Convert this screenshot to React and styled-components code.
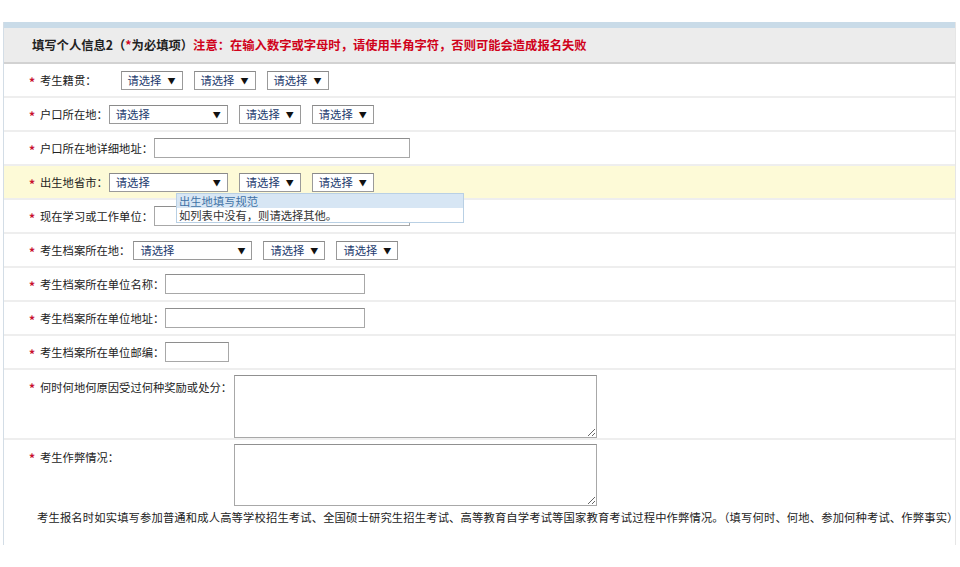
import React from "react";
import styled, { createGlobalStyle } from "styled-components";

const Global = createGlobalStyle`
  html, body { margin: 0; padding: 0; background: #fff; }
  body { font-family: "Noto Sans CJK SC", "Noto Sans", sans-serif; color: #222; }
  * { box-sizing: border-box; }
`;

const Page = styled.div`
  padding-top: 22px;
  width: 960px;
  height: 567px;
  overflow: hidden;
`;

const Panel = styled.div`
  margin: 0 4px 0 3px;
  border-left: 1px solid #d3dde6;
  border-right: 1px solid #e6e6e6;
`;

const Header = styled.div`
  border-top: 6px solid #c9dbe8;
  border-bottom: 2px solid #d2d2d2;
  background: #ececec;
  height: 42px;
  display: flex;
  align-items: center;
  padding-left: 28px;
  font-size: 12.3px;
  font-weight: bold;
  white-space: nowrap;
`;

const Red = styled.span`
  color: #d0021b;
`;

const Row = styled.div`
  position: relative;
  display: flex;
  align-items: ${(p) => (p.$top ? "flex-start" : "center")};
  height: ${(p) => p.$h || 34}px;
  padding-left: 25px;
  padding-top: ${(p) => (p.$top ? 4 : 0)}px;
  border-bottom: 2px solid #eeeeee;
  background: ${(p) => (p.$hl ? "#fdfad7" : "transparent")};
  font-size: 11.3px;
  white-space: nowrap;
`;

const Star = styled.span`
  color: #c8102e;
  font-size: 12px;
  font-weight: bold;
  width: 11px;
  line-height: 1;
  margin-top: ${(p) => (p.$top ? 8 : 3)}px;
`;

const Label = styled.span`
  color: #222;
  line-height: 19px;
  margin-top: ${(p) => (p.$top ? 4 : 0)}px;
  min-width: ${(p) => p.$w || 0}px;
  margin-right: ${(p) => p.$gap || 1}px;
`;

const Selects = styled.div`
  display: flex;
  gap: 11px;
`;

const FakeSelect = styled.div`
  width: ${(p) => (p.$wide ? 119 : 62)}px;
  height: 19px;
  border: 1px solid #9a9a9a;
  border-top-color: #8a8a8a;
  background: #fff;
  display: flex;
  align-items: center;
  justify-content: ${(p) => (p.$wide ? "space-between" : "flex-start")};
  padding: 0 6px 0 6px;
  color: #1d3b6e;
  font-size: 11.3px;
`;

const Arrow = styled.span`
  color: #111;
  font-size: 8px;
  margin-left: ${(p) => (p.$wide ? 0 : 6)}px;
`;

const Input = styled.input`
  width: ${(p) => p.$w}px;
  height: 20px;
  border: 1px solid #a8a8a8;
  border-top-color: #8e8e8e;
  background: #fff;
  padding: 0;
  margin: 0;
  outline: none;
`;

const Area = styled.textarea`
  width: 363px;
  height: ${(p) => p.$h}px;
  border: 1px solid #a8a8a8;
  border-top-color: #909090;
  margin: ${(p) => p.$mt || 0}px 0 0 0;
  padding: 0;
  background: #fff;
  outline: none;
`;

const Tip = styled.div`
  position: absolute;
  left: 172px;
  top: 27px;
  width: 288px;
  border: 1px solid #b9d0e4;
  background: #fff;
  font-size: 11.3px;
  z-index: 2;
`;

const TipTitle = styled.div`
  background: #d7e6f4;
  color: #3f72a6;
  height: 14px;
  line-height: 14px;
  padding-left: 2px;
`;

const TipBody = styled.div`
  color: #333;
  height: 14px;
  line-height: 14px;
  padding-left: 2px;
`;

const Block = styled.div`
  height: 105px;
  padding-top: 4px;
  font-size: 11.3px;
`;

const BlockTop = styled.div`
  display: flex;
  align-items: flex-start;
  padding-left: 25px;
`;

const Note = styled.div`
  padding-left: 33px;
  margin-top: 3px;
  line-height: 16px;
  white-space: nowrap;
  letter-spacing: 0.15px;
  color: #222;
`;

const Sel = ({ wide }) => (
  <FakeSelect $wide={wide}>
    <span>请选择</span>
    <Arrow $wide={wide}>▼</Arrow>
  </FakeSelect>
);

export default function App() {
  return (
    <>
      <Global />
      <Page>
        <Panel>
          <Header>
            填写个人信息2（<Red>*</Red>为必填项）
            <Red>注意：在输入数字或字母时，请使用半角字符，否则可能会造成报名失败</Red>
          </Header>

          <Row>
            <Star>*</Star>
            <Label $gap={24}>考生籍贯：</Label>
            <Selects>
              <Sel />
              <Sel />
              <Sel />
            </Selects>
          </Row>

          <Row>
            <Star>*</Star>
            <Label>户口所在地：</Label>
            <Selects>
              <Sel wide />
              <Sel />
              <Sel />
            </Selects>
          </Row>

          <Row>
            <Star>*</Star>
            <Label>户口所在地详细地址：</Label>
            <Input $w={256} />
          </Row>

          <Row $hl>
            <Star>*</Star>
            <Label>出生地省市：</Label>
            <Selects>
              <Sel wide />
              <Sel />
              <Sel />
            </Selects>
            <Tip>
              <TipTitle>出生地填写规范</TipTitle>
              <TipBody>如列表中没有，则请选择其他。</TipBody>
            </Tip>
          </Row>

          <Row>
            <Star>*</Star>
            <Label>现在学习或工作单位：</Label>
            <Input $w={256} />
          </Row>

          <Row>
            <Star>*</Star>
            <Label $gap={3}>考生档案所在地：</Label>
            <Selects>
              <Sel wide />
              <Sel />
              <Sel />
            </Selects>
          </Row>

          <Row>
            <Star>*</Star>
            <Label>考生档案所在单位名称：</Label>
            <Input $w={200} />
          </Row>

          <Row>
            <Star>*</Star>
            <Label>考生档案所在单位地址：</Label>
            <Input $w={200} />
          </Row>

          <Row>
            <Star>*</Star>
            <Label>考生档案所在单位邮编：</Label>
            <Input $w={64} />
          </Row>

          <Row $top $h={70}>
            <Star $top>*</Star>
            <Label $top $w={193}>何时何地何原因受过何种奖励或处分：</Label>
            <Area $h={63} $mt={1} />
          </Row>

          <Block>
            <BlockTop>
              <Star $top>*</Star>
              <Label $top $w={193}>考生作弊情况：</Label>
              <Area $h={62} />
            </BlockTop>
            <Note>
              考生报名时如实填写参加普通和成人高等学校招生考试、全国硕士研究生招生考试、高等教育自学考试等国家教育考试过程中作弊情况。（填写何时、何地、参加何种考试、作弊事实）
            </Note>
          </Block>
        </Panel>
      </Page>
    </>
  );
}
